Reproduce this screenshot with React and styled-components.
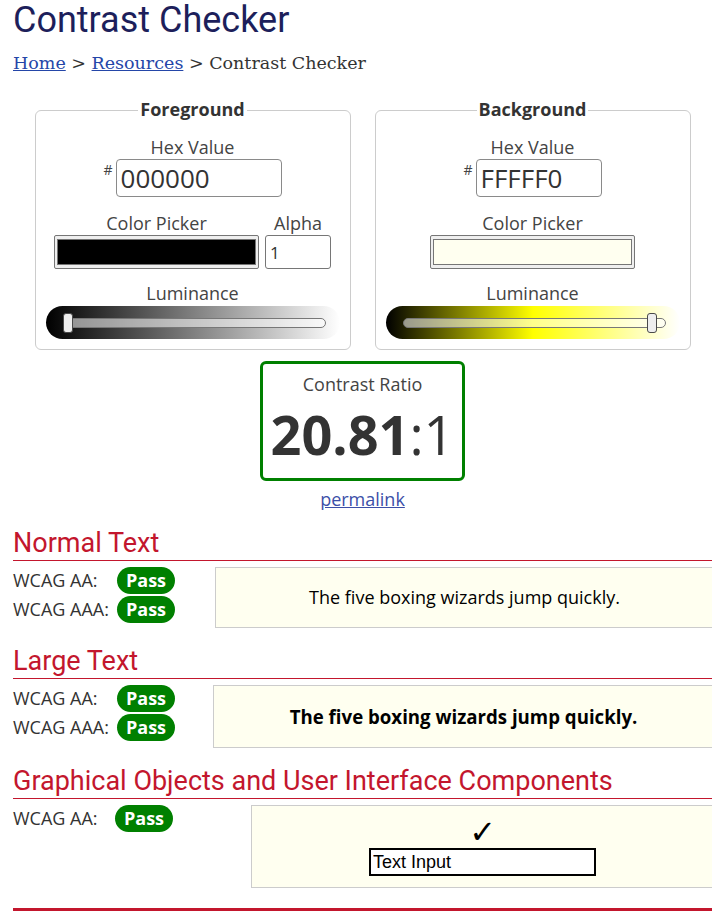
import React from 'react';
import styled, { createGlobalStyle } from 'styled-components';

const GlobalStyle = createGlobalStyle`
  html, body {
    margin: 0;
    padding: 0;
    background: #fff;
    overflow: hidden;
  }
  body {
    font-family: 'Open Sans', 'Liberation Sans', sans-serif;
    font-size: 18px;
    color: #333;
  }
`;

const Page = styled.main`
  width: 699px;
  margin-left: 13px;
`;

const Title = styled.h1`
  margin: 0;
  font-family: Roboto, 'Liberation Sans', sans-serif;
  font-weight: 400;
  font-size: 36px;
  line-height: 40px;
  color: #1d1f5b;
`;

const Crumbs = styled.nav`
  margin-top: 11px;
  font-family: 'DejaVu Serif', 'Liberation Serif', serif;
  font-size: 17.5px;
  line-height: 24px;
  color: #333;

  a {
    color: #2446a8;
    text-decoration: underline;
  }
`;

const PanelRow = styled.div`
  display: flex;
  justify-content: center;
  gap: 24px;
  margin-top: 35px;
`;

const Panel = styled.section`
  width: 316px;
  box-sizing: border-box;
  border: 1px solid #ccc;
  border-radius: 6px;
  padding: 0 10px 10px;
  display: flex;
  flex-direction: column;
  align-items: center;
`;

const PanelTitle = styled.h2`
  margin: -14px 0 0;
  padding: 0 2px;
  background: #fff;
  font-size: 18px;
  font-weight: 700;
  line-height: 24px;
  color: #333;
`;

const Field = styled.div`
  display: flex;
  flex-direction: column;
  align-items: center;
  margin-top: ${(p) => p.$top || 0}px;
  width: ${(p) => (p.$stretch ? '100%' : 'auto')};
`;

const FieldLabel = styled.label`
  display: block;
  font-size: 18px;
  line-height: 24px;
  color: #444;
  text-align: center;
`;

const HexRow = styled.div`
  display: flex;
  align-items: flex-start;
`;

const Hash = styled.span`
  font-size: 14px;
  line-height: 14px;
  margin: 4px 3px 0 0;
  color: #444;
`;

const HexInput = styled.input`
  width: ${(p) => p.$width}px;
  height: 38px;
  box-sizing: border-box;
  border: 1px solid #8a8a8a;
  border-radius: 4px;
  padding: 0 4px;
  font-family: 'Open Sans', sans-serif;
  font-size: 26px;
  color: #333;
  background: #fff;
`;

const PickerRow = styled.div`
  display: flex;
  gap: 6px;
  margin-top: 14px;
`;

const ColorWell = styled.div`
  width: 205px;
  height: 34px;
  box-sizing: border-box;
  border: 1px solid #767676;
  border-radius: 2px;
  background: #efefef;
  padding: 3px 2px;
`;

const Swatch = styled.div`
  height: 100%;
  box-sizing: border-box;
  border: 1px solid #767676;
  background: ${(p) => p.$color};
`;

const AlphaInput = styled.input`
  width: 66px;
  height: 34px;
  box-sizing: border-box;
  border: 1px solid #767676;
  border-radius: 3px;
  padding: 0 4px;
  font-family: 'Open Sans', sans-serif;
  font-size: 17px;
  color: #333;
`;

const Slider = styled.div`
  position: relative;
  width: 100%;
  height: 33px;
  margin-top: 1px;
  border-radius: 17px;
  background: ${(p) => p.$gradient};
`;

const Track = styled.div`
  position: absolute;
  left: 17px;
  right: 14px;
  top: 12px;
  height: 10px;
  box-sizing: border-box;
  border: 1px solid #777;
  border-radius: 5px;
  background: rgba(255, 255, 255, 0.55);
`;

const Thumb = styled.div`
  position: absolute;
  top: -6px;
  left: calc(-1px + (100% - 8px) * ${(p) => p.$value});
  width: 10px;
  height: 20px;
  box-sizing: border-box;
  border: 1px solid #4a4a4a;
  border-radius: 3px;
  background: #eee;
`;

const RatioBox = styled.div`
  width: 205px;
  box-sizing: border-box;
  margin: 11px auto 0;
  border: 3px solid #008000;
  border-radius: 6px;
  padding: 8px 0 14px;
  text-align: center;
`;

const RatioLabel = styled.div`
  font-size: 18px;
  line-height: 24px;
  color: #444;
`;

const RatioValue = styled.div`
  margin-top: 8px;
  font-size: 54px;
  line-height: 60px;
  color: #333;

  b {
    font-weight: 700;
  }
`;

const Permalink = styled.a`
  display: block;
  margin-top: 6px;
  text-align: center;
  font-size: 18px;
  line-height: 24px;
  color: #3c4fa8;
  text-decoration: underline;
`;

const SectionHeading = styled.h2`
  margin: ${(p) => p.$top}px 0 0;
  padding-bottom: 2px;
  border-bottom: 1px solid #c3162d;
  font-family: Roboto, 'Liberation Sans', sans-serif;
  font-weight: 400;
  font-size: 27px;
  line-height: 30px;
  color: #c3162d;
`;

const ResultRow = styled.div`
  display: flex;
  align-items: flex-start;
  margin-top: 6px;
`;

const Ratings = styled.div`
  display: grid;
  grid-template-columns: ${(p) => p.$labelWidth}px auto;
  row-gap: 2px;
  align-items: center;
`;

const RatingLabel = styled.span`
  font-size: 18px;
  line-height: 27px;
  color: #333;
`;

const Badge = styled.span`
  display: inline-block;
  height: 27px;
  padding: 0 9px;
  border-radius: 14px;
  background: #008000;
  color: #fff;
  font-weight: 700;
  font-size: 18px;
  line-height: 27px;
`;

const SampleBox = styled.div`
  flex: 1;
  margin-left: ${(p) => p.$gap}px;
  margin-right: -2px;
  border: 1px solid #ccc;
  background: #fffff0;
  color: #000;
  text-align: center;
  padding: 17px 0;
  font-size: ${(p) => p.$size}px;
  font-weight: ${(p) => (p.$bold ? 700 : 400)};
  line-height: ${(p) => p.$line}px;
`;

const GraphicBox = styled.div`
  flex: 1;
  margin-left: ${(p) => p.$gap}px;
  margin-right: -2px;
  border: 1px solid #ccc;
  background: #fffff0;
  display: flex;
  flex-direction: column;
  align-items: center;
  padding: 10px 0 11px;
`;

const Check = styled.span`
  font-family: 'DejaVu Sans', sans-serif;
  font-size: 32px;
  line-height: 32px;
  color: #000;
`;

const DemoInput = styled.input`
  width: 227px;
  height: 28px;
  box-sizing: border-box;
  border: 2px solid #000;
  padding: 0 2px;
  font-family: 'Liberation Sans', Arial, sans-serif;
  font-size: 18px;
  color: #000;
  background: #fff;
`;

const Footer = styled.footer`
  margin-top: 20px;
  border-top: 4px solid #c3162d;
  height: 10px;
`;

function ColorPanel({ title, hex, hexWidth, color, alpha, gradient, value }) {
  return (
    <Panel>
      <PanelTitle>{title}</PanelTitle>
      <Field $top={14}>
        <FieldLabel>Hex Value</FieldLabel>
        <HexRow>
          <Hash>#</Hash>
          <HexInput $width={hexWidth} defaultValue={hex} />
        </HexRow>
      </Field>
      <PickerRow>
        <Field>
          <FieldLabel>Color Picker</FieldLabel>
          <ColorWell>
            <Swatch $color={color} />
          </ColorWell>
        </Field>
        {alpha !== undefined && (
          <Field>
            <FieldLabel>Alpha</FieldLabel>
            <AlphaInput defaultValue={alpha} />
          </Field>
        )}
      </PickerRow>
      <Field $top={12} $stretch>
        <FieldLabel>Luminance</FieldLabel>
        <Slider $gradient={gradient} role="slider">
          <Track>
            <Thumb $value={value} />
          </Track>
        </Slider>
      </Field>
    </Panel>
  );
}

function Results({ labelWidth, rows, children }) {
  return (
    <ResultRow>
      <Ratings $labelWidth={labelWidth}>
        {rows.map((r) => (
          <React.Fragment key={r}>
            <RatingLabel>{r}</RatingLabel>
            <span>
              <Badge>Pass</Badge>
            </span>
          </React.Fragment>
        ))}
      </Ratings>
      {children}
    </ResultRow>
  );
}

export default function App() {
  const sentence = 'The five boxing wizards jump quickly.';
  return (
    <>
      <GlobalStyle />
      <Page>
        <Title>Contrast Checker</Title>
        <Crumbs>
          <a href="#home">Home</a> &gt; <a href="#resources">Resources</a> &gt; Contrast Checker
        </Crumbs>

        <PanelRow>
          <ColorPanel
            title="Foreground"
            hex="000000"
            hexWidth={166}
            color="#000000"
            alpha="1"
            gradient="linear-gradient(to right, #000 0%, #fff 100%)"
            value={0}
          />
          <ColorPanel
            title="Background"
            hex="FFFFF0"
            hexWidth={126}
            color="#fffff0"
            gradient="linear-gradient(to right, #000 0%, #ff0 50%, #fff 100%)"
            value={0.965}
          />
        </PanelRow>

        <RatioBox>
          <RatioLabel>Contrast Ratio</RatioLabel>
          <RatioValue>
            <b>20.81</b>:1
          </RatioValue>
        </RatioBox>
        <Permalink href="#permalink">permalink</Permalink>

        <SectionHeading $top={17}>Normal Text</SectionHeading>
        <Results labelWidth={104} rows={['WCAG AA:', 'WCAG AAA:']}>
          <SampleBox $gap={40} $size={18} $line={25}>
            {sentence}
          </SampleBox>
        </Results>

        <SectionHeading $top={18}>Large Text</SectionHeading>
        <Results labelWidth={104} rows={['WCAG AA:', 'WCAG AAA:']}>
          <SampleBox $gap={38} $size={18.66} $line={27} $bold>
            {sentence}
          </SampleBox>
        </Results>

        <SectionHeading $top={18}>Graphical Objects and User Interface Components</SectionHeading>
        <Results labelWidth={102} rows={['WCAG AA:']}>
          <GraphicBox $gap={78}>
            <Check>✓</Check>
            <DemoInput defaultValue="Text Input" />
          </GraphicBox>
        </Results>

        <Footer />
      </Page>
    </>
  );
}
